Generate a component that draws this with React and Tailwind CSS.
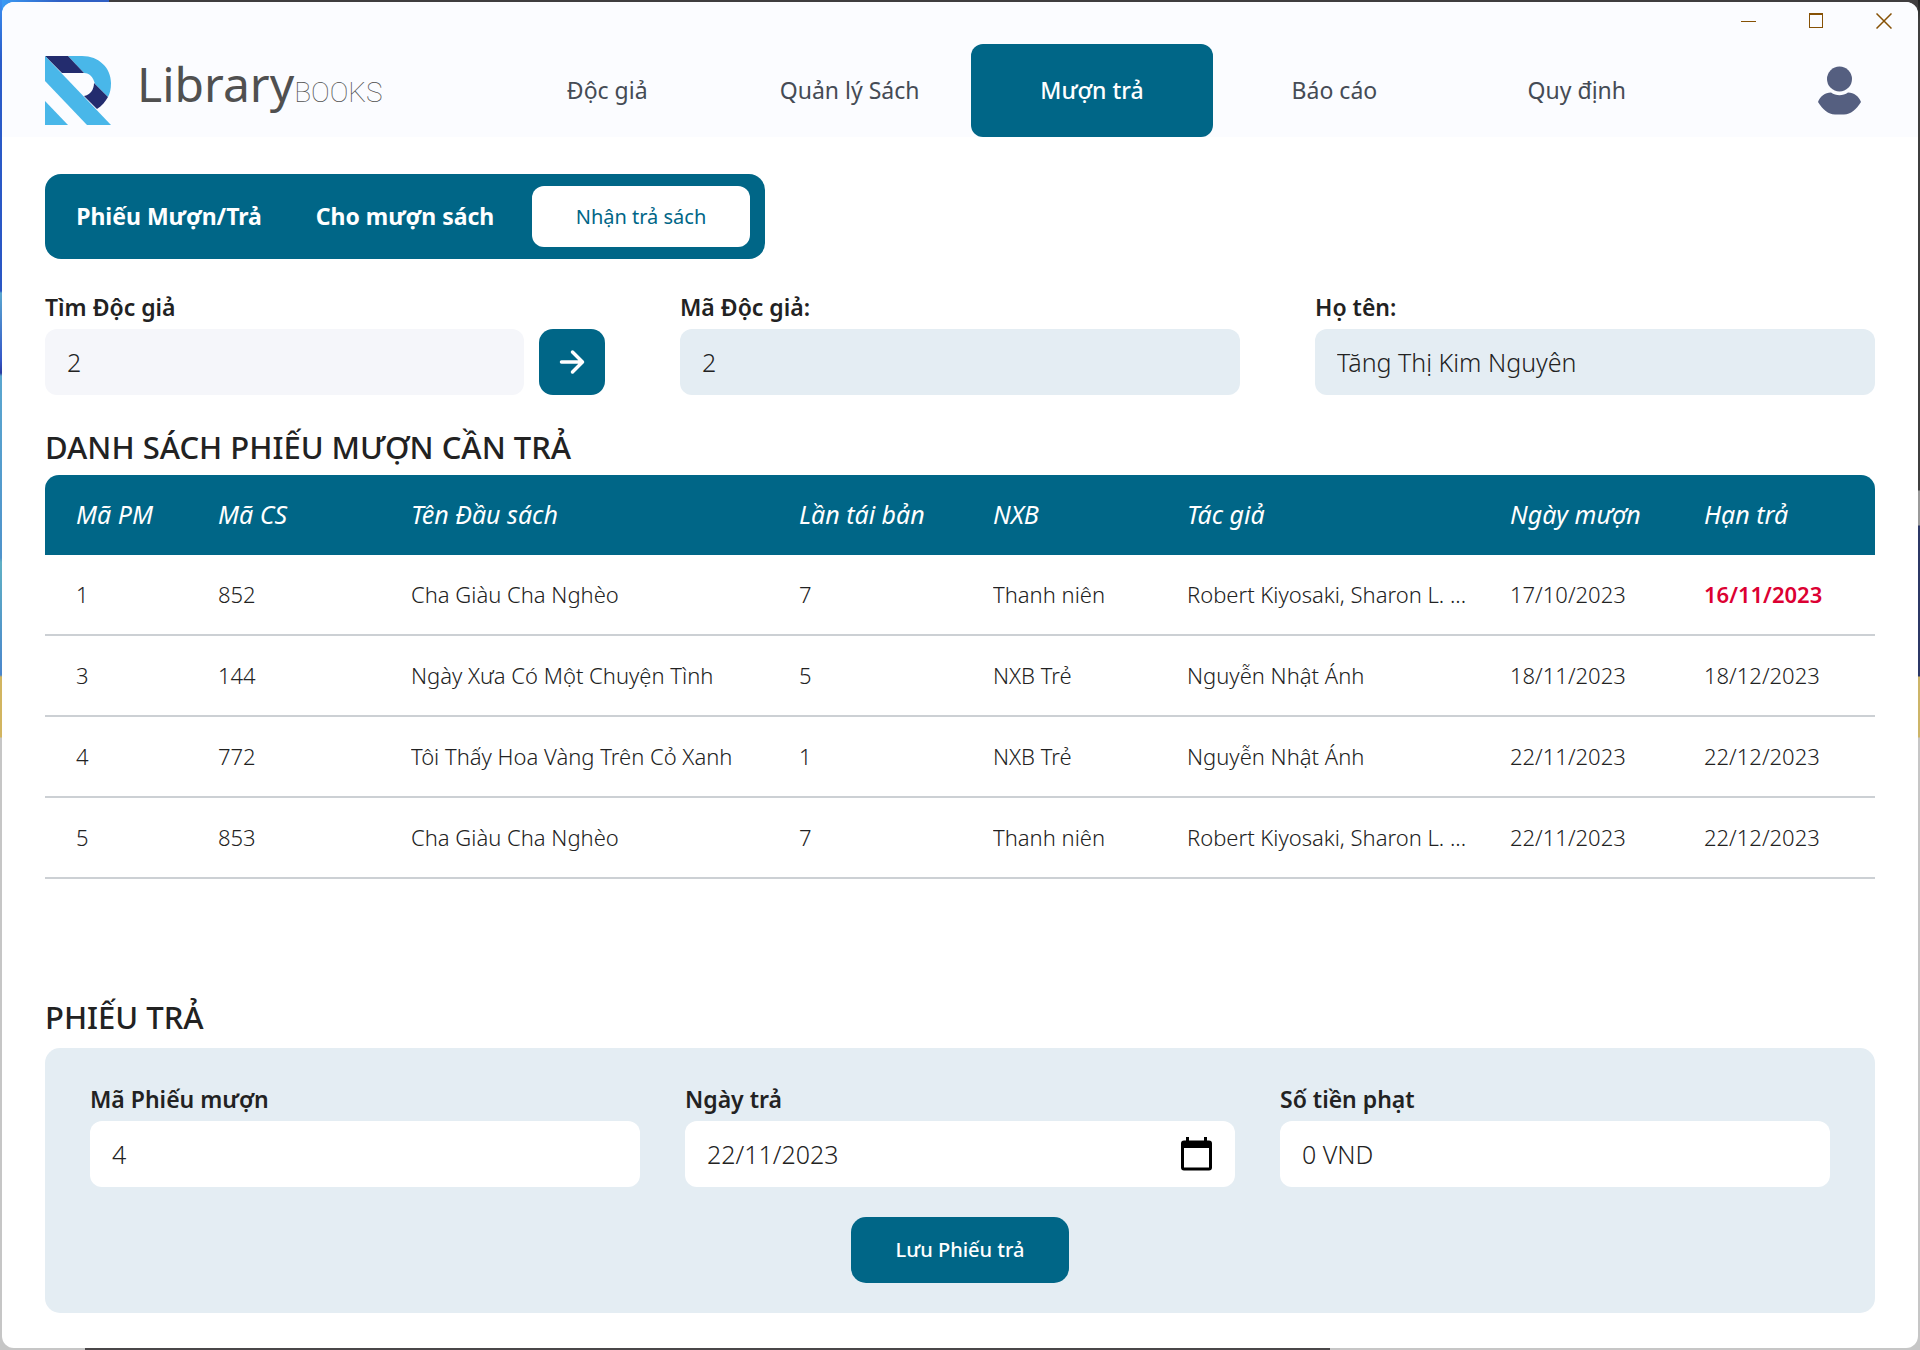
import React from "react";

const NAV = ["Độc giả", "Quản lý Sách", "Mượn trả", "Báo cáo", "Quy định"];
const TABS = ["Phiếu Mượn/Trả", "Cho mượn sách", "Nhận trả sách"];
const COLUMNS = ["Mã PM", "Mã CS", "Tên Đầu sách", "Lần tái bản", "NXB", "Tác giả", "Ngày mượn", "Hạn trả"];
const ROWS = [
  ["1", "852", "Cha Giàu Cha Nghèo", "7", "Thanh niên", "Robert Kiyosaki, Sharon L. ...", "17/10/2023", "16/11/2023"],
  ["3", "144", "Ngày Xưa Có Một Chuyện Tình", "5", "NXB Trẻ", "Nguyễn Nhật Ánh", "18/11/2023", "18/12/2023"],
  ["4", "772", "Tôi Thấy Hoa Vàng Trên Cỏ Xanh", "1", "NXB Trẻ", "Nguyễn Nhật Ánh", "22/11/2023", "22/12/2023"],
  ["5", "853", "Cha Giàu Cha Nghèo", "7", "Thanh niên", "Robert Kiyosaki, Sharon L. ...", "22/11/2023", "22/12/2023"],
];
const OVERDUE = "16/11/2023";

function Logo() {
  return (
    <svg viewBox="0 0 66 69" className="h-[69px] w-[66px] shrink-0" aria-hidden="true">
      <path fill="#49b7e9" d="M23 0h14c17 0 29 12 29 27 0 6-1 10-3 14L50 28C48 21 45 17 39 17Z" />
      <path fill="#232c6e" d="M0 0h23l16 17H17Z" />
      <path fill="#232c6e" d="m49 27 14 14c-3 5-6 9-11 12L39 40c6-1 10-6 10-13Z" />
      <path fill="#49b7e9" d="M0 0l66 69H42L0 25Z" />
      <path fill="#49b7e9" d="M0 45l23 24H0Z" />
    </svg>
  );
}

function WindowControls() {
  const base = "flex h-[38px] w-[68px] items-center justify-center text-[#865105]";
  return (
    <div className="flex justify-end">
      <button aria-label="Minimize" className={base}>
        <svg viewBox="0 0 16 16" className="size-4" fill="none" stroke="currentColor" shapeRendering="crispEdges"><path d="M1 8.5h15" /></svg>
      </button>
      <button aria-label="Maximize" className={base}>
        <svg viewBox="0 0 16 16" className="size-4" fill="none" stroke="currentColor" shapeRendering="crispEdges"><path d="M1.5 1v13.5h13V1" /><path strokeWidth="2" d="M1 1h14" /></svg>
      </button>
      <button aria-label="Close" className={base}>
        <svg viewBox="0 0 16 16" className="size-4" fill="none" stroke="currentColor" strokeWidth="1.5"><path d="m.5.5 15 15M15.5.5l-15 15" /></svg>
      </button>
    </div>
  );
}

function Field({ id, label, value, tone, readOnly, children }) {
  return (
    <div className="min-w-0 flex-1">
      <label htmlFor={id} className="block text-[23px] leading-11 font-semibold text-[#222]">{label}</label>
      <div className="flex gap-[15px]">
        <div className={`flex h-[66px] min-w-0 flex-1 items-center rounded-[12px] ${tone}`}>
          <input id={id} defaultValue={value} readOnly={readOnly} className="h-full w-full min-w-0 bg-transparent px-[22px] text-[25px] font-light text-[#222] outline-none" />
          {id === "return-date" && (
            <button type="button" aria-label="Chọn ngày" className="mr-[22px] shrink-0 text-black">
              <svg viewBox="0 0 32 34" className="h-[34px] w-8" fill="none" stroke="currentColor">
                <rect x="1.5" y="5" width="28" height="27" rx="1.5" strokeWidth="3" />
                <path strokeWidth="7" d="M1 7.500h29" />
                <path strokeWidth="3" d="M6.500 0v6M24.500 0v6" />
              </svg>
            </button>
          )}
        </div>
        {children}
      </div>
    </div>
  );
}

/* Slivers of the desktop that show around the window's edge. */
function EdgeColumn({ side }) {
  const left = side === "left";
  return (
    <div className={`absolute inset-y-0 w-0.5 ${left ? "left-0 bg-[linear-gradient(#3a8ef0_0,#2a5cc9_60px,#2a56c4_291px,#5aa6cf_293px,#3558c8_360px,#2a3ba0_373px,#5aa6cf_376px,#4f93cb_558px,#5fb0c4_562px,#4a86cc_675px,#d2b560_677px,#d2b560_737px,#c6c6c6_738px)]" : "right-0 bg-[linear-gradient(#1f1f1f_0,#3f3f3f_20px,#3f3f3f_490px,#9a9a9a_491px,#9a9a9a_525px,#2c3866_526px,#2c3866_676px,#cdb568_677px,#cdb568_737px,#c6c6c6_738px)]"}`} />
  );
}

export default function App() {
  return (
    <div className="relative flex min-h-screen bg-[#c6c6c6] p-0.5 font-['Noto_Sans','Open_Sans',sans-serif] text-[#222]">
      <div className="absolute inset-x-0 top-0 h-3 bg-[linear-gradient(90deg,#3a9cf5_0,#2f5fc4_60px,#2f5fc4_109px,#3f3d3f_109px)]" />
      <div className="absolute inset-x-0 bottom-0 h-0.5 bg-[linear-gradient(90deg,#c6c6c6_85px,#4a4749_85px,#4a4749_1330px,#c6c6c6_1330px)]" />
      <EdgeColumn side="left" />
      <EdgeColumn side="right" />
      <div className="relative flex min-w-0 flex-1 flex-col overflow-hidden rounded-[12px] bg-white">
        <header className="bg-[#fbfcff]">
          <WindowControls />
          <div className="mt-1 flex items-center justify-between pr-[57px] pl-[43px]">
            <div className="flex w-[441px] items-center gap-[26px]">
              <Logo />
              <div className="flex items-baseline pb-3">
                <span className="text-[48px] leading-14 text-[#505050]">Library</span>
                <span className="font-['Roboto'] text-[28px] font-thin text-[#505050]">BOOKS</span>
              </div>
            </div>
            <nav className="flex max-w-[1212px] flex-1">
              {NAV.map((item) => (
                <a key={item} href="#" className={`flex h-[93px] flex-1 items-center justify-center rounded-[12px] text-[23px] ${item === "Mượn trả" ? "bg-[#006687] font-medium text-white" : "text-[#454b55]"}`}>{item}</a>
              ))}
            </nav>
            <button aria-label="Tài khoản" className="ml-auto">
              <svg viewBox="0 0 43 49" className="h-[49px] w-[43px]" fill="#555f80">
                <ellipse cx="21.500" cy="13" rx="12.500" ry="12.500" />
                <path d="M13 26.500c5 3.500 12 3.500 17 0 6 0 11 4 13 9.500-5 8-10 12-17 12.500h-9C10 48 5 44 0 36c2-5.500 7-9.500 13-9.500Z" />
              </svg>
            </button>
          </div>
        </header>

        <main className="flex flex-1 flex-col px-[43px] pt-[37px] pb-[35px]">
          <div role="tablist" className="grid h-[85px] w-[720px] grid-cols-3 items-center justify-items-center rounded-[16px] bg-[#006687] px-1.5 text-white">
            {TABS.map((tab, i) => (
              <button key={tab} role="tab" aria-selected={i === 2} className={i === 2 ? "h-[61px] w-[218px] rounded-[12px] bg-white text-[20px] text-[#006687]" : "text-[23px] font-bold"}>{tab}</button>
            ))}
          </div>

          <form className="mt-[26px] flex gap-[75px]">
            <Field id="search" label="Tìm Độc giả" value="2" tone="bg-[#f5f6fa]">
              <button type="button" aria-label="Tìm" className="flex size-[66px] shrink-0 items-center justify-center rounded-[14px] bg-[#006687] text-white">
                <svg viewBox="0 0 26 26" className="size-[26px]" fill="none" stroke="currentColor" strokeWidth="3.500" strokeLinecap="round" strokeLinejoin="round"><path d="M2.500 13H23M13.500 3 23.500 13 13.500 23" /></svg>
              </button>
            </Field>
            <Field id="reader-id" label="Mã Độc giả:" value="2" tone="bg-[#e4edf3]" readOnly />
            <Field id="reader-name" label="Họ tên:" value="Tăng Thị Kim Nguyên" tone="bg-[#e4edf3]" readOnly />
          </form>

          <h2 className="mt-6 text-[31px] leading-14 font-medium">DANH SÁCH PHIẾU MƯỢN CẦN TRẢ</h2>
          <table className="w-full table-fixed border-separate border-spacing-0 text-left text-[22px]">
            <colgroup>
              <col className="w-[173px]" />
              <col className="w-[193px]" />
              <col className="w-[388px]" />
              <col className="w-[194px]" />
              <col className="w-[194px]" />
              <col className="w-[323px]" />
              <col className="w-[194px]" />
              <col className="w-[171px]" />
            </colgroup>
            <thead>
              <tr>
                {COLUMNS.map((c) => (
                  <th key={c} className="h-20 bg-[#006687] p-0 text-[25px] font-normal whitespace-nowrap text-white italic first:rounded-tl-[14px] first:pl-[31px] last:rounded-tr-[14px]">{c}</th>
                ))}
              </tr>
            </thead>
            <tbody>
              {ROWS.map((row) => (
                <tr key={row[0]}>
                  {row.map((cell, i) => (
                    <td key={i} className={`h-[81px] truncate border-b-2 border-[#ccd0d4] p-0 first:pl-[31px] ${cell === OVERDUE ? "font-semibold text-[#dc0032]" : "font-light text-[#222]"}`}>{cell}</td>
                  ))}
                </tr>
              ))}
            </tbody>
          </table>

          <section className="mt-auto">
            <h2 className="text-[31px] leading-[62px] font-medium">PHIẾU TRẢ</h2>
            <form className="flex flex-col items-center rounded-[15px] bg-[#e4edf3] px-[45px] pt-[29px] pb-[30px]">
              <div className="flex w-full gap-[45px]">
                <Field id="loan-id" label="Mã Phiếu mượn" value="4" tone="bg-white" />
                <Field id="return-date" label="Ngày trả" value="22/11/2023" tone="bg-white" />
                <Field id="fine" label="Số tiền phạt" value="0 VND" tone="bg-white" />
              </div>
              <button type="button" className="mt-[30px] h-[66px] w-[218px] rounded-[15px] bg-[#006687] text-[20px] font-medium text-white">Lưu Phiếu trả</button>
            </form>
          </section>
        </main>
      </div>
    </div>
  );
}
